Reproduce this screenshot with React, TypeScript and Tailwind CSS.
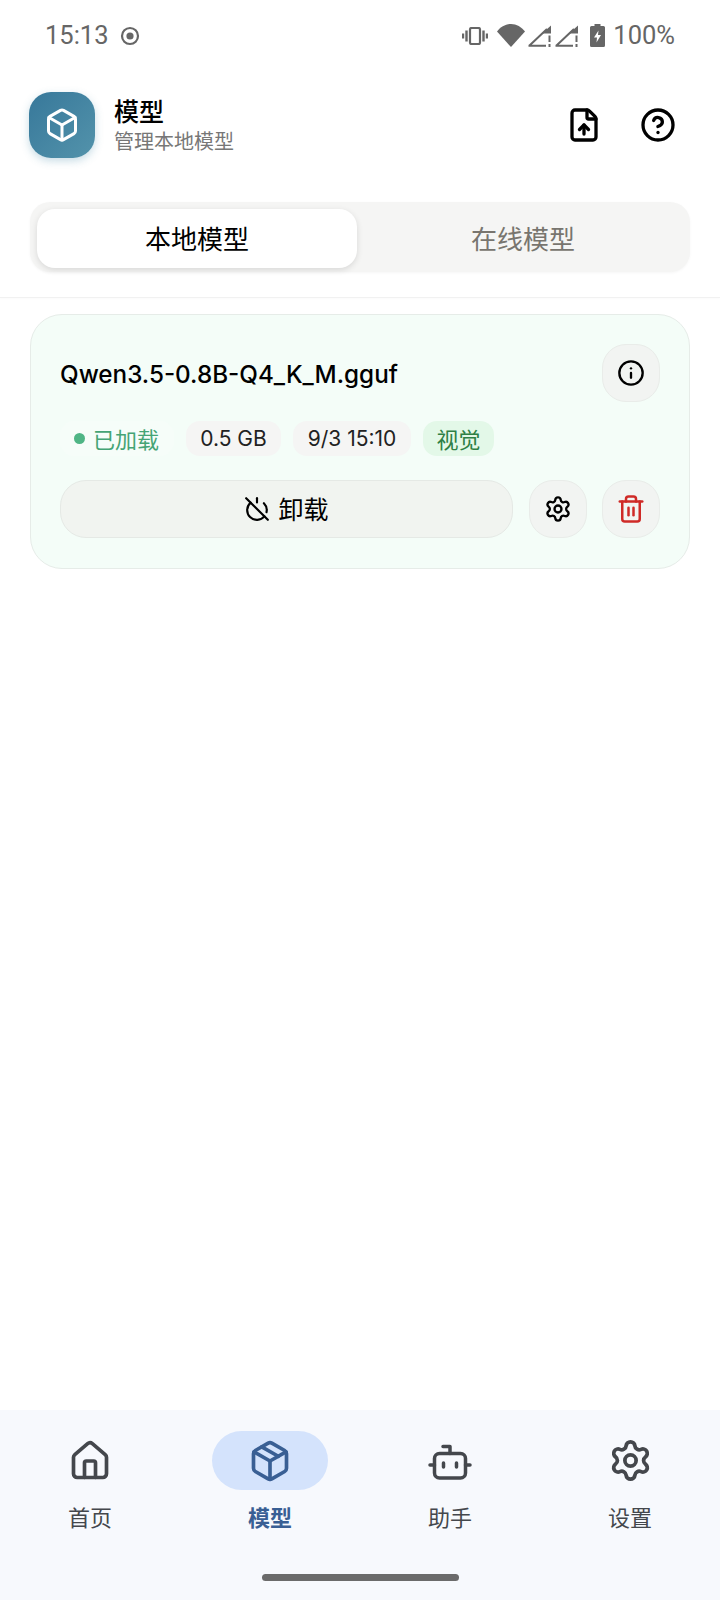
import { Box, CircleHelp, FileUp, House, Info, Package, PowerOff, Settings, Trash2 } from "lucide-react";

function BotIcon({ size }: { size: number }) {
  return (
    <svg width={size} height={size} viewBox="0 0 44 44" fill="none" stroke="currentColor" strokeWidth="3.5" strokeLinecap="round" strokeLinejoin="round">
      <rect x="6.5" y="14.5" width="31" height="24.5" rx="5" />
      <path d="M22 14.5V7.5H15M2 26h4.5M37.5 26H42M15.5 24v4M28.5 24v4" />
    </svg>
  );
}

const navItems = [
  { icon: House, label: "首页", size: 44 },
  { icon: Package, label: "模型", size: 44, active: true },
  { icon: BotIcon, label: "助手", size: 44 },
  { icon: Settings, label: "设置", size: 45 },
];

function SignalIcon() {
  return (
    <svg width="24" height="22" viewBox="0 0 24 22">
      <path d="M1.5 20.5 19 4M0.5 20.8H18" fill="none" stroke="currentColor" strokeWidth="2" />
      <path d="M14 8.5 23 0.5V8.5Z" fill="currentColor" />
      <path d="M21.5 10.5v6.5M21.5 19v3" stroke="currentColor" strokeWidth="2" fill="none" />
    </svg>
  );
}

function StatusBar() {
  return (
    <div className="h-[70px] flex items-center justify-between pl-[45px] pr-[45px] pt-[1px] text-[#666] text-[25.5px] font-['Roboto',sans-serif]">
      <div className="flex items-center gap-[11px]">
        <span>15:13</span>
        <svg width="20" height="20" viewBox="0 0 20 20">
          <circle cx="10" cy="10" r="8" fill="none" stroke="currentColor" strokeWidth="2.2" />
          <circle cx="10" cy="10" r="3.6" fill="currentColor" />
        </svg>
      </div>
      <div className="flex items-center">
        <svg width="26" height="18" viewBox="0 0 26 18" className="mr-[9px]">
          <rect x="8" y="1" width="10" height="16" rx="1.5" fill="none" stroke="currentColor" strokeWidth="2.2" />
          <path d="M4.5 3.5v11M1 6.5v5M21.5 3.5v11M25 6.5v5" stroke="currentColor" strokeWidth="2.4" />
        </svg>
        <svg width="28" height="23" viewBox="0 0 28 23" className="mr-[3px]">
          <path d="M14 23 0 7.5C3.5 3 8.5 0 14 0S24.5 3 28 7.5Z" fill="currentColor" />
        </svg>
        <SignalIcon />
        <span className="w-[3px]" />
        <SignalIcon />
        <svg width="15" height="23" viewBox="0 0 15 23" className="ml-[11px] mr-[8px]">
          <path d="M4.5 0h6v2h3a1.5 1.5 0 0 1 1.5 1.5v18a1.5 1.5 0 0 1-1.5 1.5h-12A1.5 1.5 0 0 1 0 21.5v-18A1.5 1.5 0 0 1 1.5 2h3Z" fill="currentColor" />
          <path d="M8.5 6.5 4 13.5h3l-.5 5 4.5-7.5H8Z" fill="#fff" />
        </svg>
        <span>100%</span>
      </div>
    </div>
  );
}

function IconButton({ children }: { children: React.ReactNode }) {
  return (
    <button className="w-[58px] h-[58px] shrink-0 flex items-center justify-center rounded-[24px] bg-[#f2f4f2] border border-[#e9ece9]">
      {children}
    </button>
  );
}

export default function App() {
  return (
    <div className="w-[720px] h-[1600px] flex flex-col bg-white text-black font-['Noto_Sans_CJK_SC',sans-serif]">
      <StatusBar />

      <header className="flex items-center justify-between pl-[29px] pr-[44px] pt-[22px]">
        <div className="flex items-center gap-[19px]">
          <div className="w-[66px] h-[66px] rounded-[22px] bg-gradient-to-br from-[#37789a] to-[#5393ab] shadow-[0_3px_8px_rgba(70,140,170,0.3)] flex items-center justify-center">
            <Box size={36} strokeWidth={2} className="text-white" />
          </div>
          <div className="flex flex-col">
            <span className="text-[25px] leading-[30px] font-medium">模型</span>
            <span className="text-[20px] leading-[28px] mt-[2px] text-[#777]">管理本地模型</span>
          </div>
        </div>
        <div className="flex items-center gap-[38px]">
          <FileUp size={36} strokeWidth={2.2} />
          <CircleHelp size={36} strokeWidth={2.2} />
        </div>
      </header>

      <div className="pt-[44px] px-[30px] pb-[25px] border-b border-[#f1f1f1] shadow-[0_1px_2px_rgba(0,0,0,0.02)]">
        <div className="flex h-[70px] pt-[7px] px-[7px] pb-[4px] rounded-[20px] bg-[#f5f5f4] shadow-[0_1px_3px_rgba(0,0,0,0.04)]">
          <div className="w-[320px] flex items-center justify-center pb-[3px] rounded-[18px] bg-white shadow-[0_2px_6px_rgba(0,0,0,0.12)] text-[26px]">
            本地模型
          </div>
          <div className="flex-1 flex items-center justify-center pb-[3px] pl-[6px] text-[26px] text-[#78756f]">在线模型</div>
        </div>
      </div>

      <main className="flex-1 px-[30px] pt-[16px]">
        <div className="h-[255px] rounded-[32px] border border-[#e6ece8] bg-[#f4fdf8] px-[29px] pt-[29px] flex flex-col">
          <div className="flex items-center justify-between">
            <span className="pt-[4px] text-[24.25px] font-medium font-['Inter',sans-serif]">Qwen3.5-0.8B-Q4_K_M.gguf</span>
            <IconButton>
              <Info size={28} strokeWidth={2} />
            </IconButton>
          </div>
          <div className="flex items-center mt-[19px] h-[35px]">
            <span className="h-[35px] w-[114px] mr-[12px] pl-[14px] flex items-center gap-[8px] rounded-[14px] bg-[#f6fdf9] text-[22px] text-[#45a475]">
              <span className="w-[11px] h-[11px] rounded-full bg-[#4fb585]" />
              已加载
            </span>
            <span className="h-[35px] w-[95px] justify-center flex items-center rounded-[14px] bg-[#f5f5f4] text-[21px] text-[#222] font-['Inter',sans-serif]">0.5 GB</span>
            <span className="h-[35px] w-[118px] ml-[12px] justify-center flex items-center rounded-[14px] bg-[#f5f5f4] text-[21px] text-[#222] font-['Inter',sans-serif]">9/3 15:10</span>
            <span className="h-[35px] w-[71px] ml-[12px] justify-center flex items-center rounded-[14px] bg-[#e3f8e8] text-[22px] text-[#2e8045]">视觉</span>
          </div>
          <div className="flex items-center gap-[15.5px] mt-[24px]">
            <button className="flex-1 h-[58px] rounded-[26px] bg-[#f1f4f0] border border-[#e5e9e5] flex items-center justify-center gap-[8px] text-[25px]">
              <PowerOff size={26} strokeWidth={2} />
              卸载
            </button>
            <IconButton>
              <Settings size={28} strokeWidth={2} />
            </IconButton>
            <IconButton>
              <Trash2 size={30} strokeWidth={2} className="text-[#cf2a27]" />
            </IconButton>
          </div>
        </div>
      </main>

      <nav className="h-[190px] bg-[#f7f9fd] flex flex-col items-center">
        <div className="w-full grid grid-cols-4 pt-[21px]">
          {navItems.map((item) => (
            <div key={item.label} className="flex flex-col items-center">
              <div className={"w-[116px] h-[59px] rounded-full flex items-center justify-center " + (item.active ? "bg-[#d4e3fc] text-[#395f94]" : "text-[#44474c]")}>
                <item.icon size={item.size} />
              </div>
              <span className={"mt-[8px] text-[22px] leading-[36px] " + (item.active ? "font-bold text-[#395f94]" : "text-[#44474c]")}>
                {item.label}
              </span>
            </div>
          ))}
        </div>
        <div className="w-[197px] h-[7px] rounded-full bg-[#6b6b6b] mt-[40px]" />
      </nav>
    </div>
  );
}
